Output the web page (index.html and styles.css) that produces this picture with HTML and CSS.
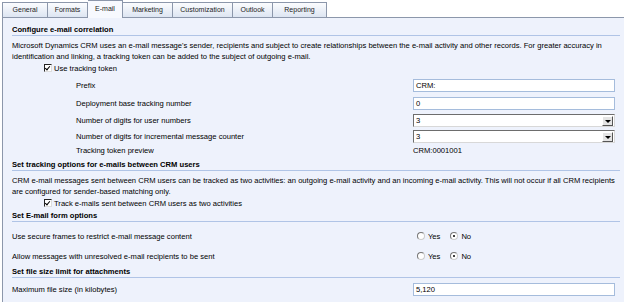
FILE: index.html
```html
<!DOCTYPE html>
<html lang="en">
<head>
    <meta charset="UTF-8">
    <title>System Settings - E-mail</title>
    <link rel="stylesheet" href="styles.css">
</head>
<body>
    <div class="tabs">
        <div class="tab tab-general">General</div>
        <div class="tab tab-formats">Formats</div>
        <div class="tab tab-email active">E-mail</div>
        <div class="tab tab-marketing">Marketing</div>
        <div class="tab tab-custom">Customization</div>
        <div class="tab tab-outlook">Outlook</div>
        <div class="tab tab-reporting">Reporting</div>
    </div>

    <div class="panel">
        <div class="section-title">Configure e-mail correlation</div>
        <p class="desc">Microsoft Dynamics CRM uses an e-mail message's sender, recipients and subject to create relationships between the e-mail activity and other records. For greater accuracy in identification and linking, a tracking token can be added to the subject of outgoing e-mail.</p>
        <label class="check-row"><span class="checkbox checked"></span>Use tracking token</label>

        <div class="form-grid token-grid">
            <div class="label">Prefix</div>
            <div class="field"><div class="textbox">CRM:</div></div>
            <div class="label">Deployment base tracking number</div>
            <div class="field"><div class="textbox">0</div></div>
            <div class="label">Number of digits for user numbers</div>
            <div class="field"><div class="select"><span>3</span><span class="arrow"></span></div></div>
            <div class="label">Number of digits for incremental message counter</div>
            <div class="field"><div class="select"><span>3</span><span class="arrow"></span></div></div>
            <div class="label">Tracking token preview</div>
            <div class="field preview">CRM:0001001</div>
        </div>

        <div class="section-title s2">Set tracking options for e-mails between CRM users</div>
        <p class="desc">CRM e-mail messages sent between CRM users can be tracked as two activities: an outgoing e-mail activity and an incoming e-mail activity. This will not occur if all CRM recipients are configured for sender-based matching only.</p>
        <label class="check-row"><span class="checkbox checked"></span>Track e-mails sent between CRM users as two activities</label>

        <div class="section-title s3">Set E-mail form options</div>
        <div class="form-grid options-grid">
            <div class="label">Use secure frames to restrict e-mail message content</div>
            <div class="field radios">
                <span class="radio"></span>Yes
                <span class="radio on"></span>No
            </div>
            <div class="label">Allow messages with unresolved e-mail recipients to be sent</div>
            <div class="field radios">
                <span class="radio"></span>Yes
                <span class="radio on"></span>No
            </div>
        </div>

        <div class="section-title">Set file size limit for attachments</div>
        <div class="form-grid size-grid">
            <div class="label">Maximum file size (in kilobytes)</div>
            <div class="field"><div class="textbox">5,120</div></div>
        </div>
    </div>
</body>
</html>
```

FILE: styles.css
```css
* {
    margin: 0;
    padding: 0;
    box-sizing: border-box;
}

body {
    font-family: 'Liberation Sans', Arial, sans-serif;
    font-size: 7.6px;
    line-height: 11px;
    color: #000;
    background: #fff;
    width: 624px;
    height: 302px;
    overflow: hidden;
}

/* tab strip */
.tabs {
    display: flex;
    align-items: flex-end;
    height: 17px;
    padding-left: 2px;
}

.tab {
    height: 15px;
    line-height: 14px;
    text-align: center;
    font-size: 7px;
    border: 1px solid #8c97ab;
    border-bottom: none;
    border-left: none;
    background: linear-gradient(#fbfcfe, #dde5f2);
    color: #1c1c1c;
}

.tab-general { width: 46px; border-left: 1px solid #8c97ab; }
.tab-formats { width: 40px; }
.tab-email { width: 35px; }
.tab-marketing { width: 50px; }
.tab-custom { width: 60px; }
.tab-outlook { width: 40px; }
.tab-reporting { width: 54px; }

.tab.active {
    height: 18px;
    line-height: 16px;
    background: #f7f9fe;
    margin-bottom: -1px;
    position: relative;
}

/* content area */
.panel {
    border-top: 1px solid #8c97ab;
    border-left: 1px solid #8c97ab;
    margin-left: 2px;
    background: #eef2fc;
    height: 285px;
    padding: 6px 4px 0 9px;
}

.section-title {
    font-weight: bold;
    height: 12px;
    line-height: 11px;
    border-bottom: 1px solid #b0c4e6;
}

.s2 { margin-top: 1px; }
.s3 { margin-top: 1px; }

.desc {
    margin-top: 4px;
}

.check-row {
    display: flex;
    align-items: center;
    height: 12px;
    padding-left: 32px;
}

.checkbox {
    width: 8px;
    height: 8px;
    border: 1px solid #222;
    border-right-color: #ddd;
    border-bottom-color: #ddd;
    background: #fff;
    margin-right: 2px;
    position: relative;
}

.checkbox.checked::after {
    content: "";
    position: absolute;
    left: 1px;
    top: 0;
    width: 2px;
    height: 4px;
    border: solid #000;
    border-width: 0 1.5px 1.5px 0;
    transform: rotate(40deg);
}

/* label / field rows */
.form-grid {
    display: grid;
    grid-template-columns: 401px 202px;
}

.token-grid {
    margin-top: 5px;
    grid-template-rows: 18px 17px 16px 14px 14px;
    align-items: start;
}

.token-grid .label {
    padding-left: 64px;
    line-height: 13px;
}

.token-grid .preview {
    line-height: 14px;
}

.options-grid {
    margin-top: 4px;
    grid-template-rows: 20px 20px;
    align-items: center;
}

.size-grid {
    margin-top: 5px;
    grid-template-rows: 13px;
    align-items: center;
}

.textbox {
    height: 13px;
    border: 1px solid #a5bcdc;
    background: #fff;
    padding-left: 2px;
    line-height: 11px;
}

.select {
    display: flex;
    justify-content: space-between;
    align-items: center;
    height: 13px;
    border: 1px solid #6d6d6d;
    border-right-color: #d8d8d8;
    border-bottom-color: #d8d8d8;
    background: #fff;
    padding-left: 2px;
    line-height: 11px;
}

.arrow {
    width: 11px;
    height: 10px;
    margin-right: 1px;
    background: #e4e4e4;
    border: 1px solid #fff;
    border-right-color: #555;
    border-bottom-color: #555;
    position: relative;
}

.arrow::after {
    content: "";
    position: absolute;
    left: 2px;
    top: 3px;
    border-left: 3px solid transparent;
    border-right: 3px solid transparent;
    border-top: 3px solid #000;
}

.radios {
    display: flex;
    align-items: center;
    padding-left: 4px;
}

.radio {
    width: 8px;
    height: 8px;
    border-radius: 50%;
    border: 1px solid #777;
    border-right-color: #ccc;
    border-bottom-color: #ccc;
    background: #fff;
    margin-right: 3px;
    position: relative;
}

.radio.on {
    margin-left: 10px;
}

.radio.on::after {
    content: "";
    position: absolute;
    left: 2px;
    top: 2px;
    width: 2px;
    height: 2px;
    border-radius: 50%;
    background: #000;
}
```
